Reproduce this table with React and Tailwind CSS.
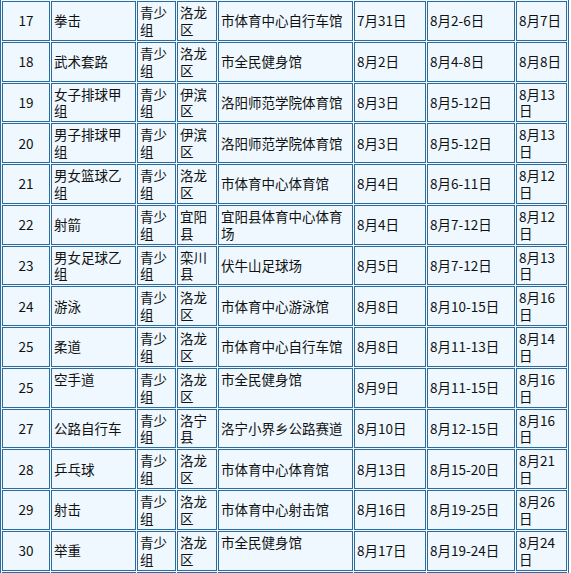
import React from 'react'

const rows = [
  ['17', '拳击', '洛龙区', '市体育中心自行车馆', '7月31日', '8月2-6日', '8月7日'],
  ['18', '武术套路', '洛龙区', '市全民健身馆', '8月2日', '8月4-8日', '8月8日'],
  ['19', '女子排球甲组', '伊滨区', '洛阳师范学院体育馆', '8月3日', '8月5-12日', '8月13日'],
  ['20', '男子排球甲组', '伊滨区', '洛阳师范学院体育馆', '8月3日', '8月5-12日', '8月13日'],
  ['21', '男女篮球乙组', '洛龙区', '市体育中心体育馆', '8月4日', '8月6-11日', '8月12日'],
  ['22', '射箭', '宜阳县', '宜阳县体育中心体育场', '8月4日', '8月7-12日', '8月12日'],
  ['23', '男女足球乙组', '栾川县', '伏牛山足球场', '8月5日', '8月7-12日', '8月13日'],
  ['24', '游泳', '洛龙区', '市体育中心游泳馆', '8月8日', '8月10-15日', '8月16日'],
  ['25', '柔道', '洛龙区', '市体育中心自行车馆', '8月8日', '8月11-13日', '8月14日'],
  ['25', '空手道', '洛龙区', '市全民健身馆', '8月9日', '8月11-15日', '8月16日', { top2: true, top5: true }],
  ['27', '公路自行车', '洛宁县', '洛宁小界乡公路赛道', '8月10日', '8月12-15日', '8月16日'],
  ['28', '乒乓球', '洛龙区', '市体育中心体育馆', '8月13日', '8月15-20日', '8月21日'],
  ['29', '射击', '洛龙区', '市体育中心射击馆', '8月16日', '8月19-25日', '8月26日'],
  ['30', '举重', '洛龙区', '市全民健身馆', '8月17日', '8月19-24日', '8月24日', { top5: true }],
]

const cell = 'border border-[#2c6b9b] px-[2px] py-[2px] align-middle'

export default function App() {
  return (
    <div className="h-[573px] overflow-hidden bg-white">
      <table
        className="mt-[-1px] w-[569px] table-fixed border border-[#2c6b9b] bg-[#eef8fe] text-[13.5px] leading-[16.875px] text-[#111]"
        style={{ borderCollapse: 'separate', borderSpacing: '1px', fontFamily: '"Noto Sans CJK SC", "Noto Sans", sans-serif' }}
      >
        <colgroup>
          <col className="w-[48px]" />
          <col className="w-[85px]" />
          <col className="w-[39px]" />
          <col className="w-[40px]" />
          <col className="w-[135px]" />
          <col className="w-[72px]" />
          <col className="w-[88px]" />
          <col className="w-[51px]" />
        </colgroup>
        <tbody>
          {rows.map((r, i) => {
            const opt = r[7] || {}
            return (
              <tr key={i}>
                <td className={cell + ' text-center'}>{r[0]}</td>
                <td className={opt.top2 ? cell + ' !align-top' : cell}>{r[1]}</td>
                <td className={cell}>青少组</td>
                <td className={cell}>{r[2]}</td>
                <td className={opt.top5 ? cell + ' !align-top' : cell}>{r[3]}</td>
                <td className={cell}>{r[4]}</td>
                <td className={cell}>{r[5]}</td>
                <td className={cell + ' border-[#1f4f78]'}>{r[6]}</td>
              </tr>
            )
          })}
          {/* next row, only its top edge shows */}
          <tr>
            <td className={cell + ' h-[40px]'}></td>
            <td className={cell}></td>
            <td className={cell}></td>
            <td className={cell}></td>
            <td className={cell}></td>
            <td className={cell}></td>
            <td className={cell}></td>
            <td className={cell + ' border-[#1f4f78]'}></td>
          </tr>
        </tbody>
      </table>
    </div>
  )
}
